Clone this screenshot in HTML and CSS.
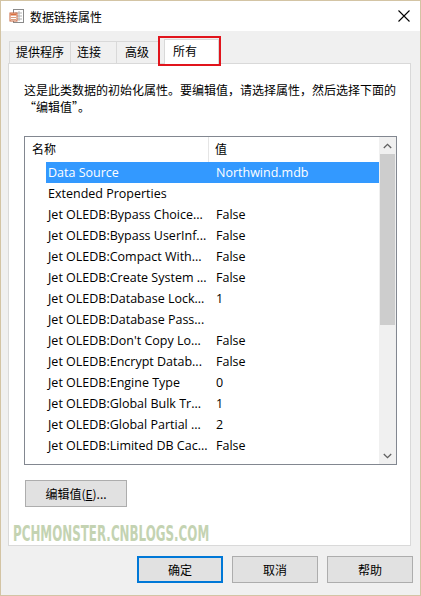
FILE: index.html
```html
<!DOCTYPE html>
<html lang="zh-CN">
<head>
<meta charset="utf-8">
<link rel="stylesheet" href="styles.css">
</head>
<body>
<div class="window">
  <div class="titlebar">
    <svg class="app-icon" width="16" height="16" viewBox="0 0 16 16">
      <rect x="4.5" y="1.5" width="10" height="13" fill="#fff" stroke="#8a8a8a"/>
      <line x1="6" y1="5" x2="13" y2="5" stroke="#b0b0b0"/>
      <line x1="6" y1="8" x2="13" y2="8" stroke="#b0b0b0"/>
      <line x1="6" y1="11" x2="13" y2="11" stroke="#b0b0b0"/>
      <line x1="10" y1="3" x2="10" y2="13" stroke="#b0b0b0"/>
      <rect x="1" y="5" width="7" height="8" fill="#fff" stroke="#c8643c"/>
      <rect x="1.5" y="5.5" width="6" height="2" fill="#d9703f"/>
      <line x1="2" y1="9.5" x2="7" y2="9.5" stroke="#d9a080"/>
      <line x1="2" y1="11.5" x2="7" y2="11.5" stroke="#d9a080"/>
    </svg>
    <span class="title">数据链接属性</span>
    <svg class="close" width="12" height="12" viewBox="0 0 12 12">
      <path d="M0.5 0.5 L11.5 11.5 M11.5 0.5 L0.5 11.5" stroke="#000" stroke-width="1.1" fill="none"/>
    </svg>
  </div>
  <div class="body">
    <div class="tabs">
      <div class="tab">提供程序</div>
      <div class="tab">连接</div>
      <div class="tab">高级</div>
      <div class="tab tab-active">所有</div>
      <div class="highlight"></div>
    </div>
    <div class="panel">
      <p class="desc">这是此类数据的初始化属性。要编辑值，请选择属性，然后选择下面的<br>“编辑值”。</p>
      <div class="listbox">
        <div class="list-main">
          <div class="list-header">
            <div class="hcell hname">名称</div>
            <div class="hcell hval">值</div>
          </div>
          <div class="rows">
            <div class="row selected"><span class="cname">Data Source</span><span class="cval">Northwind.mdb</span></div>
            <div class="row"><span class="cname">Extended Properties</span><span class="cval"></span></div>
            <div class="row"><span class="cname">Jet OLEDB:Bypass Choice...</span><span class="cval">False</span></div>
            <div class="row"><span class="cname">Jet OLEDB:Bypass UserInf...</span><span class="cval">False</span></div>
            <div class="row"><span class="cname">Jet OLEDB:Compact With...</span><span class="cval">False</span></div>
            <div class="row"><span class="cname">Jet OLEDB:Create System ...</span><span class="cval">False</span></div>
            <div class="row"><span class="cname">Jet OLEDB:Database Lock...</span><span class="cval">1</span></div>
            <div class="row"><span class="cname">Jet OLEDB:Database Pass...</span><span class="cval"></span></div>
            <div class="row"><span class="cname">Jet OLEDB:Don't Copy Lo...</span><span class="cval">False</span></div>
            <div class="row"><span class="cname">Jet OLEDB:Encrypt Datab...</span><span class="cval">False</span></div>
            <div class="row"><span class="cname">Jet OLEDB:Engine Type</span><span class="cval">0</span></div>
            <div class="row"><span class="cname">Jet OLEDB:Global Bulk Tr...</span><span class="cval">1</span></div>
            <div class="row"><span class="cname">Jet OLEDB:Global Partial ...</span><span class="cval">2</span></div>
            <div class="row"><span class="cname">Jet OLEDB:Limited DB Cac...</span><span class="cval">False</span></div>
          </div>
        </div>
        <div class="scrollbar">
          <div class="sb-btn">
            <svg width="9" height="6" viewBox="0 0 9 6"><path d="M0.8 5 L4.5 1.3 L8.2 5" stroke="#606060" stroke-width="1.3" fill="none"/></svg>
          </div>
          <div class="sb-track">
            <div class="sb-thumb"></div>
          </div>
          <div class="sb-btn">
            <svg width="9" height="6" viewBox="0 0 9 6"><path d="M0.8 1 L4.5 4.7 L8.2 1" stroke="#606060" stroke-width="1.3" fill="none"/></svg>
          </div>
        </div>
      </div>
      <button class="btn btn-edit">编辑值(<u>E</u>)...</button>
      <div class="watermark">PCHMONSTER.CNBLOGS.COM</div>
    </div>
    <div class="actions">
      <button class="btn btn-default">确定</button>
      <button class="btn">取消</button>
      <button class="btn">帮助</button>
    </div>
  </div>
</div>
</body>
</html>
```

FILE: styles.css
```css
* { box-sizing: border-box; }
html, body { margin: 0; padding: 0; background: #fff; }
body {
  font-family: "Segoe UI", "Open Sans", "Noto Sans CJK SC", sans-serif;
  font-size: 12px;
  color: #000;
}
.window {
  width: 421px;
  height: 596px;
  border: 1px solid #d3c4a4;
  display: flex;
  flex-direction: column;
  background: #f0f0f0;
}
.titlebar {
  height: 30px;
  background: #fff;
  display: flex;
  align-items: center;
  padding-left: 8px;
  flex: none;
}
.app-icon { margin-right: 5px; }
.title {
  font-family: "Noto Sans CJK SC", sans-serif;
  font-size: 12px;
  flex: 1;
}
.close { margin-right: 10px; }
.body {
  flex: 1;
  display: flex;
  flex-direction: column;
  padding: 8px 7px 0 7px;
}
.tabs {
  position: relative;
  display: flex;
  align-items: flex-end;
  height: 24px;
  padding-left: 1px;
}
.tab {
  font-family: "Noto Sans CJK SC", sans-serif;
  height: 22px;
  line-height: 20px;
  padding: 0 6px;
  border: 1px solid #d9d9d9;
  border-bottom: none;
  margin-right: -1px;
  background: #f0f0f0;
}
.tab:nth-child(2) { padding: 0 15px 0 6px; }
.tab:nth-child(3) { padding: 0 9px 0 8px; }
.tab-active {
  height: 25px;
  margin-bottom: -1px;
  margin-left: 6px;
  background: #fff;
  padding: 0 21px 0 8px;
  line-height: 22px;
  position: relative;
  z-index: 1;
}
.highlight {
  position: absolute;
  left: 150px;
  top: -3px;
  width: 63px;
  height: 30px;
  border: 2px solid #e1141c;
  z-index: 2;
}
.panel {
  background: #fff;
  border: 1px solid #d9d9d9;
  height: 483px;
  margin-right: 2px;
  padding: 17px 0 0 15px;
  display: flex;
  flex-direction: column;
  align-items: flex-start;
}
.desc {
  margin: 0;
  font-family: "Noto Sans CJK SC", sans-serif;
  line-height: 17px;
}
.listbox {
  margin-top: 21px;
  width: 373px;
  height: 329px;
  border: 1px solid #828790;
  display: flex;
  overflow: hidden;
}
.list-main { flex: 1; overflow: hidden; }
.list-header {
  display: flex;
  height: 25px;
}
.hcell {
  font-family: "Noto Sans CJK SC", sans-serif;
  line-height: 24px;
}
.hname {
  width: 184px;
  padding-left: 7px;
  border-right: 1px solid #e5e5e5;
}
.hval { padding-left: 6px; }
.rows { padding-left: 21px; }
.row {
  display: flex;
  height: 21px;
  line-height: 21px;
  font-size: 12.5px;
  white-space: nowrap;
}
.row.selected { background: #3399ff; color: #fff; }
.cname { width: 168px; padding-left: 2px; overflow: hidden; }
.cval { padding-left: 2px; }
.scrollbar {
  width: 17px;
  background: #f0f0f0;
  display: flex;
  flex-direction: column;
}
.sb-btn {
  height: 17px;
  display: flex;
  align-items: center;
  justify-content: center;
}
.sb-track { flex: 1; }
.sb-thumb {
  height: 171px;
  margin: 0 1px;
  background: #cdcdcd;
}
.btn {
  font-family: "Noto Sans CJK SC", sans-serif;
  font-size: 12px;
  background: #e1e1e1;
  border: 1px solid #adadad;
  height: 27px;
  padding: 0;
  color: #000;
}
.btn-edit {
  margin-top: 15px;
  margin-left: 1px;
  width: 102px;
}
.watermark {
  margin-top: 16px;
  margin-left: -11px;
  font-family: "Liberation Sans Narrow", "DejaVu Sans Condensed", sans-serif;
  font-stretch: condensed;
  font-weight: bold;
  font-size: 22px;
  line-height: 22px;
  color: #c4d3b2;
  transform: scaleX(0.6);
  transform-origin: left center;
  white-space: nowrap;
}
.actions {
  display: flex;
  justify-content: flex-end;
  gap: 9px;
  margin-top: 10px;
  padding-right: 0;
}
.actions .btn { width: 86px; }
.btn-default { border: 2px solid #0078d7; }
```
